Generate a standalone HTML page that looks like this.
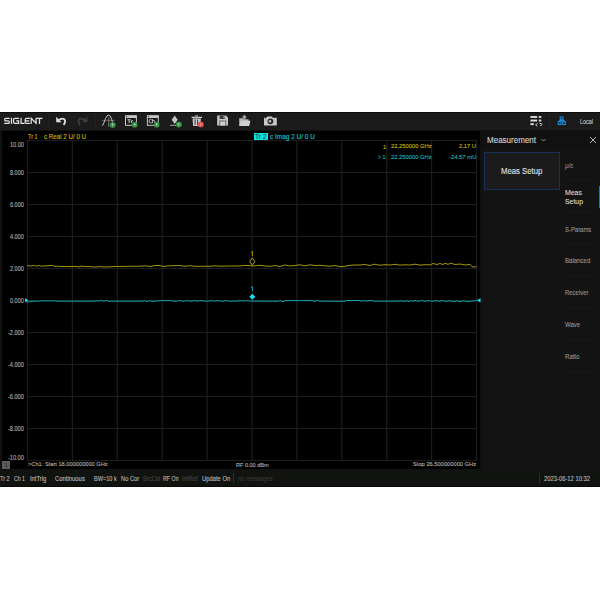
<!DOCTYPE html>
<html><head><meta charset="utf-8">
<style>
*{margin:0;padding:0;box-sizing:border-box}
html,body{width:600px;height:600px;background:#fff;overflow:hidden}
body{position:relative;font-family:"Liberation Sans",sans-serif}
.abs{position:absolute}
#tb{position:absolute;left:0;top:112px;width:600px;height:18px;background:#1b1b1b;border-top:1px solid #0c0c0c}
#main{position:absolute;left:0;top:130px;width:600px;height:340px;background:#0e110e}
#plot{position:absolute;left:2px;top:131px;width:478px;height:338px;background:#000}
#panel{position:absolute;left:482px;top:130px;width:118px;height:340px;background:#131313}
#phead{position:absolute;left:482px;top:130px;width:118px;height:19px;background:#111}
#sb{position:absolute;left:0;top:470px;width:600px;height:17px;background:#101310;border-bottom:1px solid #080808}
.t{position:absolute;white-space:nowrap;transform-origin:0 0;-webkit-text-stroke:0.1px currentColor}
.yl{position:absolute;right:576px;font-size:7px;color:#c4c4c4;white-space:nowrap;line-height:9px;letter-spacing:-0.25px}
.sep{position:absolute;width:1px;background:#232323}
svg{position:absolute;overflow:visible}
</style></head><body>
<div id="tb"></div>
<div id="main"></div>
<div id="plot"></div>
<div id="panel"></div>
<div id="phead"></div>
<div id="sb"></div>

<!-- toolbar -->
<svg width="50" height="20" style="left:0;top:110px" viewBox="0 110 50 20"><g fill="none" stroke="#e2e2e2" stroke-width="1.25">
<path d="M9.7 118.25 H5.6 Q4.75 118.25 4.75 119.2 V119.9 Q4.75 120.8 5.6 120.8 H8.3 Q9.2 120.8 9.2 121.7 V122.4 Q9.2 123.35 8.3 123.35 H4.2"/>
<path d="M11.45 117.7 V123.9"/>
<path d="M19.1 118.25 H14.8 Q13.55 118.25 13.55 119.5 V122.1 Q13.55 123.35 14.8 123.35 H18.6 V120.9 H16.2"/>
<path d="M21.05 117.7 V123.35 H24.6"/>
<path d="M29.9 118.25 H26.4 Q25.2 118.25 25.2 119.5 V122.1 Q25.2 123.35 26.4 123.35 H29.9 M25.2 120.8 H29.2"/>
<path d="M31.2 123.9 V118.3 L36.1 123.3 V117.7"/>
<path d="M36.5 118.25 H42.5 M39.5 118.25 V123.9"/>
</g></svg>

<div class="sep" style="left:48px;top:115px;height:12px"></div>
<div class="sep" style="left:95px;top:115px;height:12px"></div>
<div class="sep" style="left:209px;top:115px;height:12px"></div>
<div class="sep" style="left:257px;top:115px;height:12px"></div>
<div class="sep" style="left:549px;top:115px;height:12px"></div>
<svg width="600" height="20" style="left:0;top:110px" viewBox="0 110 600 20">
 <!-- undo -->
 <path d="M56.2 116.8 L56.2 122.3 L61.6 122.3 Z" fill="#dadada"/>
 <path d="M58.2 120.6 Q61.5 117.6 64.2 119.2 Q66.2 121.5 63.6 124.9" fill="none" stroke="#dadada" stroke-width="1.9"/>
 <!-- redo -->
 <path d="M87.3 116.8 L87.3 122.3 L81.9 122.3 Z" fill="#3e3e3e"/>
 <path d="M85.3 120.6 Q82 117.6 79.3 119.2 Q77.3 121.5 79.9 124.9" fill="none" stroke="#3e3e3e" stroke-width="1.9"/>
 <!-- marker icon -->
 <line x1="101.8" y1="120.4" x2="114.8" y2="120.4" stroke="#7a7a7a" stroke-width="0.7"/>
 <line x1="108.7" y1="117.4" x2="108.7" y2="127" stroke="#909090" stroke-width="0.8"/>
 <path d="M102.3 125.8 Q104.3 122.6 105.5 118.6 Q106.9 115 108.7 115.1 Q110.5 115.2 111.6 119.4 Q112.2 121.6 113 123" fill="none" stroke="#d0d0d0" stroke-width="0.95"/>
 <circle cx="112.7" cy="124.9" r="3.0" fill="#348a40"/>
 <path d="M112.7 123.3 V126.6 M111.2 124.4 H114.2" stroke="#b0d8b0" stroke-width="0.7"/>
 <!-- Tr icon -->
 <rect x="125.5" y="115.7" width="10.9" height="9.6" fill="none" stroke="#c4c8c4" stroke-width="1"/>
 <rect x="125.5" y="115.7" width="10.9" height="2.3" fill="#c4c8c4"/>
 <circle cx="126.6" cy="116.6" r="0.55" fill="#222"/>
 <path d="M127.4 119.75 H130.8 M129.1 119.75 V123 M131.4 120.4 V123 M131.4 121.6 Q131.8 120.6 133.0 120.6" fill="none" stroke="#c8cac8" stroke-width="0.95"/>
 <circle cx="134.7" cy="124.7" r="2.9" fill="#348a40"/>
 <path d="M134.7 123.2 V126.2 M133.3 124.3 H136.1" stroke="#b0d8b0" stroke-width="0.7"/>
 <!-- Ch icon -->
 <rect x="147.4" y="115.7" width="10.9" height="9.6" fill="none" stroke="#c4c8c4" stroke-width="1"/>
 <rect x="147.4" y="115.7" width="10.9" height="2.3" fill="#c4c8c4"/>
 <circle cx="148.5" cy="116.6" r="0.55" fill="#222"/>
 <path d="M151.6 119.7 Q151 119.2 150.4 119.2 Q149.1 119.3 149.1 121.1 Q149.1 123 150.4 123 Q151.1 123 151.7 122.5 M152.4 119.0 V123.1 M152.4 121.2 Q152.9 120.4 153.8 120.4 Q154.8 120.4 154.8 121.4 V123.1" fill="none" stroke="#c8cac8" stroke-width="0.9"/>
 <circle cx="156.7" cy="124.7" r="2.9" fill="#348a40"/>
 <path d="M156.7 123.2 V126.2 M155.3 124.3 H158.1" stroke="#b0d8b0" stroke-width="0.7"/>
 <!-- diamond marker icon -->
 <path d="M174.7 115.5 L177.7 119.7 L174.7 123.9 L171.7 119.7 Z" fill="#c4c4c4"/>
 <line x1="170" y1="125.3" x2="176.5" y2="125.3" stroke="#c4c4c4" stroke-width="0.8"/>
 <circle cx="178.8" cy="124.6" r="3.0" fill="#348a40"/>
 <path d="M178.8 123.0 V126.3 M177.3 124.1 H180.3" stroke="#b0d8b0" stroke-width="0.7"/>
 <!-- trash -->
 <path d="M195.2 115.9 H198" stroke="#c8c8c8" stroke-width="1"/>
 <path d="M191.6 117.4 H202" stroke="#c8c8c8" stroke-width="1.3"/>
 <path d="M192.6 118.6 L193.1 126.1 H200.3 L200.9 118.6 Z" fill="#c8c8c8"/>
 <path d="M195.1 119.6 V125 M197.6 119.6 V125" stroke="#2c2c2c" stroke-width="0.9"/>
 <circle cx="200.8" cy="124.4" r="2.9" fill="#dd5252"/>
 <rect x="199.9" y="123.7" width="1.8" height="1.4" fill="#f4a0a0"/>
 <!-- save -->
 <path d="M217.2 115.6 H226 L228 117.6 V125.6 H217.2 Z" fill="#c8c8c8"/>
 <rect x="219.6" y="115.6" width="5.6" height="3.4" fill="#3a3a3a"/>
 <rect x="223.6" y="116.1" width="1.1" height="2.2" fill="#c8c8c8"/>
 <rect x="219.4" y="120.6" width="6.8" height="5" fill="#505050"/>
 <rect x="220.2" y="121.4" width="5.2" height="4.2" fill="#d0d0d0"/>
 <!-- open folder -->
 <path d="M244.4 114.8 L247 117.6 H245.5 V119.2 H243.3 V117.6 H241.8 Z" fill="#a8a8a8"/>
 <path d="M239.2 118.2 H242.6 L243.4 119.2 H248.6 V126 H239.2 Z" fill="#b4b4b4"/>
 <path d="M240.6 120.8 H250.4 L249.2 126 H239.6 Z" fill="#d0d0d0"/>
 <!-- camera -->
 <path d="M264 117.8 H266.6 L267.2 116.4 H272 L272.6 117.8 H276.8 V125.6 H264 Z" fill="#c8c8c8"/>
 <circle cx="270.4" cy="121.3" r="2.9" fill="#262626"/>
 <circle cx="270.0" cy="121.3" r="1.3" fill="#c0c0c0"/>
 <rect x="265" y="118.3" width="1" height="0.8" fill="#555"/>
 <!-- list icon -->
 <rect x="530.4" y="116" width="6.8" height="1.9" fill="#dadada"/>
 <rect x="538.8" y="116" width="2.5" height="1.9" fill="#dadada"/>
 <rect x="530.4" y="119.6" width="6.8" height="1.9" fill="#dadada"/>
 <rect x="538.8" y="119.6" width="2.5" height="1.9" fill="#dadada"/>
 <rect x="530.4" y="123.2" width="3.4" height="1.9" fill="#dadada"/>
 <path d="M537.6 123.4 L535.6 124.8 L537.4 126.2 M539.4 123.6 Q542 122.8 541.8 124.6 Q541.6 125.8 540.2 125.8" fill="none" stroke="#dadada" stroke-width="0.9"/>
 <!-- network icon -->
 <g fill="none" stroke="#1e8ad6" stroke-width="1.1">
  <rect x="560.2" y="117" width="2.8" height="2.4"/>
  <rect x="558.3" y="121.7" width="2.7" height="2.8"/>
  <rect x="562.7" y="121.7" width="2.7" height="2.8"/>
  <path d="M561.6 119.4 V120.6 M559.6 121.7 V120.6 H564 V121.7"/>
 </g>
</svg>

<!-- plot -->
<svg width="600" height="600" style="left:0;top:0" viewBox="0 0 600 600">
 <g stroke="#1d1d1d" stroke-width="1.2">
<line x1="27.50" y1="140" x2="27.50" y2="461"/>
<line x1="27" y1="140.5" x2="477" y2="140.5"/>
<line x1="72.40" y1="140" x2="72.40" y2="461"/>
<line x1="27" y1="172.5" x2="477" y2="172.5"/>
<line x1="117.30" y1="140" x2="117.30" y2="461"/>
<line x1="27" y1="204.5" x2="477" y2="204.5"/>
<line x1="162.20" y1="140" x2="162.20" y2="461"/>
<line x1="27" y1="236.5" x2="477" y2="236.5"/>
<line x1="207.10" y1="140" x2="207.10" y2="461"/>
<line x1="27" y1="268.5" x2="477" y2="268.5"/>
<line x1="252.00" y1="140" x2="252.00" y2="461"/>
<line x1="27" y1="300.5" x2="477" y2="300.5"/>
<line x1="296.90" y1="140" x2="296.90" y2="461"/>
<line x1="27" y1="332.5" x2="477" y2="332.5"/>
<line x1="341.80" y1="140" x2="341.80" y2="461"/>
<line x1="27" y1="364.5" x2="477" y2="364.5"/>
<line x1="386.70" y1="140" x2="386.70" y2="461"/>
<line x1="27" y1="396.5" x2="477" y2="396.5"/>
<line x1="431.60" y1="140" x2="431.60" y2="461"/>
<line x1="27" y1="428.5" x2="477" y2="428.5"/>
<line x1="476.50" y1="140" x2="476.50" y2="461"/>
<line x1="27" y1="460.5" x2="477" y2="460.5"/>
 </g>
 <polyline points="27.0,266.00 28.0,265.50 30.0,266.20 34.5,265.40 36.0,266.20 39.5,265.40 41.0,266.20 52.5,265.40 54.0,266.20 62.0,266.50 77.0,266.50 79.0,267.00 81.0,266.00 85.0,266.60 90.0,266.60 95.0,267.00 100.0,266.60 105.0,267.00 110.0,266.80 115.0,266.40 120.0,266.50 130.0,266.30 140.0,266.20 145.0,265.80 150.0,266.50 155.0,265.50 160.0,265.50 163.0,266.50 170.0,265.70 180.0,265.50 185.0,266.30 190.0,265.70 195.0,266.30 205.0,266.30 210.0,266.30 215.0,265.80 220.0,266.20 230.0,266.00 240.0,266.00 243.0,265.50 250.0,265.50 252.0,266.00 260.0,265.30 265.0,266.00 270.0,266.30 275.0,265.60 280.0,266.50 285.0,265.00 290.0,266.00 295.0,265.50 300.0,264.80 305.0,265.80 310.0,264.80 315.0,265.50 320.0,265.30 325.0,265.80 330.0,266.20 335.0,265.50 340.0,266.70 345.0,266.30 350.0,265.30 355.0,265.00 360.0,265.00 365.0,264.50 370.0,265.50 374.0,264.20 380.0,265.20 385.0,264.70 390.0,265.00 395.0,264.30 400.0,265.10 405.0,264.80 410.0,265.00 415.0,264.20 420.0,265.10 425.0,264.70 430.0,264.90 433.0,263.50 437.0,264.50 440.0,263.50 443.0,264.50 445.0,263.30 448.0,264.30 451.0,263.20 455.0,264.50 460.0,264.00 465.0,265.00 468.0,264.60 470.0,264.20 472.0,266.80 475.0,267.00 476.5,266.40" fill="none" stroke="#ac9e0c" stroke-width="0.95"/>
 <polyline points="27.0,301.60 28.0,302.30 30.0,301.30 38.0,301.20 40.0,300.90 55.0,300.90 57.0,301.20 94.0,301.20 95.0,300.90 100.0,300.90 101.5,300.30 103.0,300.90 104.0,301.30 105.0,300.90 106.0,300.30 107.5,300.90 108.0,301.20 143.0,301.20 144.0,300.60 145.0,300.80 147.0,301.50 150.0,300.80 152.0,301.30 155.0,301.20 160.0,300.70 170.0,300.60 175.0,301.30 180.0,300.60 183.0,301.30 188.0,300.60 190.0,301.30 195.0,300.60 198.0,301.20 200.0,300.60 205.0,301.20 209.0,301.10 211.0,300.50 213.0,301.10 216.0,301.10 218.0,300.50 220.0,301.10 224.0,301.10 226.0,300.50 228.0,301.10 238.0,301.10 240.0,300.50 242.0,301.10 245.0,300.50 247.0,301.10 248.0,300.50 250.0,301.10 265.0,301.20 278.0,301.30 280.0,300.50 283.0,301.80 285.0,300.60 312.0,300.60 314.0,301.30 316.0,301.30 317.0,300.20 320.0,301.20 345.0,301.30 346.0,300.50 360.0,300.50 361.0,301.30 364.0,300.50 366.0,301.20 371.0,300.40 374.0,301.20 399.0,301.20 400.0,300.60 402.0,301.20 407.0,301.20 408.0,300.60 409.0,302.00 411.0,300.50 413.0,301.30 415.0,300.60 418.0,301.30 422.0,300.60 425.0,301.30 429.0,300.60 432.0,301.30 436.0,300.60 439.0,301.30 442.0,300.60 445.0,301.30 450.0,300.80 453.0,301.50 457.0,300.90 460.0,301.50 464.0,300.90 467.0,301.50 470.0,301.30 474.0,300.90 476.5,300.40" fill="none" stroke="#14aab4" stroke-width="0.95"/>
 <!-- markers -->
 <path d="M252.3 257.9 L254.5 260.9 Q254.9 261.6 254.5 262.2 L252.3 265 L250.1 262.2 Q249.7 261.6 250.1 260.9 Z" fill="none" stroke="#b8a80c" stroke-width="0.95"/>
 <path d="M252.3 293.8 L255.3 296.8 L252.3 299.8 L249.3 296.8 Z" fill="#19d8e8"/>
 <path d="M25 298.2 L28.6 300.3 L25 302.4 Z" fill="#19d8e8"/>
 <path d="M251.0 252.6 L252.5 251.5 V256" fill="none" stroke="#c8b400" stroke-width="0.75"/>
 <path d="M251.0 287.6 L252.5 286.6 V291.1" fill="none" stroke="#19b8c8" stroke-width="0.75"/>
 <rect x="2" y="461" width="8" height="8" fill="#5c5c5c"/>
 <text x="4.6" y="467.2" font-size="5.4" fill="#222" font-family="Liberation Sans">1</text>
 <path d="M480.5 298.2 L476.6 300.3 L480.5 302.4 Z" fill="#19d8e8"/>
</svg>


<!-- trace headers -->
<div class="abs" style="left:254px;top:132.5px;width:14px;height:7.2px;background:#10e0e0"></div>

<!-- marker readouts -->

<!-- bottom of plot -->


<!-- status bar -->
<div class="sep" style="left:233px;top:473px;height:10px;background:#2e2e2e"></div>
<div class="sep" style="left:539px;top:473px;height:10px;background:#2e2e2e"></div>

<!-- side panel -->
<svg width="10" height="10" style="left:539px;top:134.8px" viewBox="0 0 10 10"><path d="M2.5 4 L4.5 6 L6.5 4" fill="none" stroke="#a8a8a8" stroke-width="0.8"/></svg>
<svg width="10" height="10" style="left:589px;top:136px" viewBox="0 0 10 10"><path d="M1 1 L7 7 M7 1 L1 7" fill="none" stroke="#c8c8c8" stroke-width="0.9"/></svg>
<div class="abs" style="left:484px;top:152px;width:76px;height:38px;background:#1b1b1b;border:1px solid #16305a"></div>

<div class="abs" style="left:566px;top:180px;width:30px;height:1px;background:#191919"></div>
<div class="abs" style="left:599px;top:186px;width:1px;height:21.5px;background:#2a6ad8"></div>
<div class="abs" style="left:566px;top:212px;width:30px;height:1px;background:#191919"></div>
<div class="abs" style="left:566px;top:244px;width:30px;height:1px;background:#191919"></div>
<div class="abs" style="left:566px;top:276px;width:30px;height:1px;background:#191919"></div>
<div class="abs" style="left:566px;top:308px;width:30px;height:1px;background:#191919"></div>
<div class="abs" style="left:566px;top:340px;width:30px;height:1px;background:#191919"></div>
<div class="abs" style="left:566px;top:372px;width:30px;height:1px;background:#191919"></div>
<div class="t" style="left:579.97px;top:118.27px;font-size:7.00px;line-height:7.00px;color:#cccccc;transform:scaleX(0.775);">Local</div>
<div class="t" style="left:28.29px;top:134.00px;font-size:6.86px;line-height:6.86px;color:#cdbf00;transform:scaleX(0.801);">Tr 1</div>
<div class="t" style="left:43.75px;top:134.00px;font-size:6.86px;line-height:6.86px;color:#cdbf00;transform:scaleX(0.905);">c Real 2 U/ 0 U</div>
<div class="t" style="left:255.27px;top:133.80px;font-size:6.86px;line-height:6.86px;color:#0b4a50;transform:scaleX(0.958);">Tr 2</div>
<div class="t" style="left:270.14px;top:134.00px;font-size:6.86px;line-height:6.86px;color:#12cdd6;transform:scaleX(0.943);">c Imag 2 U/ 0 U</div>
<div class="t" style="left:10.01px;top:141.56px;font-size:6.43px;line-height:6.43px;color:#b4b4b4;transform:scaleX(0.870);">10.00</div>
<div class="t" style="left:10.18px;top:169.56px;font-size:6.43px;line-height:6.43px;color:#b4b4b4;transform:scaleX(0.859);">8.000</div>
<div class="t" style="left:10.12px;top:201.56px;font-size:6.43px;line-height:6.43px;color:#b4b4b4;transform:scaleX(0.863);">6.000</div>
<div class="t" style="left:10.29px;top:233.56px;font-size:6.43px;line-height:6.43px;color:#b4b4b4;transform:scaleX(0.852);">4.000</div>
<div class="t" style="left:10.12px;top:265.56px;font-size:6.43px;line-height:6.43px;color:#b4b4b4;transform:scaleX(0.863);">2.000</div>
<div class="t" style="left:10.23px;top:297.56px;font-size:6.43px;line-height:6.43px;color:#b4b4b4;transform:scaleX(0.856);">0.000</div>
<div class="t" style="left:8.18px;top:329.56px;font-size:6.43px;line-height:6.43px;color:#b4b4b4;transform:scaleX(0.868);">-2.000</div>
<div class="t" style="left:8.18px;top:361.56px;font-size:6.43px;line-height:6.43px;color:#b4b4b4;transform:scaleX(0.868);">-4.000</div>
<div class="t" style="left:8.18px;top:393.56px;font-size:6.43px;line-height:6.43px;color:#b4b4b4;transform:scaleX(0.868);">-6.000</div>
<div class="t" style="left:8.18px;top:425.56px;font-size:6.43px;line-height:6.43px;color:#b4b4b4;transform:scaleX(0.868);">-8.000</div>
<div class="t" style="left:8.18px;top:455.16px;font-size:6.43px;line-height:6.43px;color:#b4b4b4;transform:scaleX(0.868);">-10.00</div>
<div class="t" style="left:383.05px;top:143.62px;font-size:6.00px;line-height:6.00px;color:#c9bb00;transform:scaleX(0.838);">1:</div>
<div class="t" style="left:391.11px;top:143.40px;font-size:6.14px;line-height:6.14px;color:#c9bb00;transform:scaleX(0.946);">22.250000 GHz</div>
<div class="t" style="left:458.91px;top:143.40px;font-size:6.14px;line-height:6.14px;color:#c9bb00;transform:scaleX(0.934);">2.17 U</div>
<div class="t" style="left:378.19px;top:153.62px;font-size:6.00px;line-height:6.00px;color:#14b9c6;transform:scaleX(0.893);">&gt; 1:</div>
<div class="t" style="left:391.11px;top:153.60px;font-size:6.14px;line-height:6.14px;color:#14b9c6;transform:scaleX(0.946);">22.250000 GHz</div>
<div class="t" style="left:448.56px;top:153.60px;font-size:6.14px;line-height:6.14px;color:#14b9c6;transform:scaleX(0.958);">-24.57 mU</div>
<div class="t" style="left:28.17px;top:462.24px;font-size:5.86px;line-height:5.86px;color:#b4b4b4;transform:scaleX(0.969);">&gt;Ch1: Start 18.000000000 GHz</div>
<div class="t" style="left:235.96px;top:462.00px;font-size:6.14px;line-height:6.14px;color:#b4b4b4;transform:scaleX(0.903);">RF 0.00 dBm</div>
<div class="t" style="left:413.47px;top:462.04px;font-size:5.86px;line-height:5.86px;color:#b4b4b4;transform:scaleX(0.978);">Stop 26.500000000 GHz</div>
<div class="t" style="left:0.39px;top:475.56px;font-size:6.43px;line-height:6.43px;color:#bdbdbd;transform:scaleX(0.864);">Tr 2</div>
<div class="t" style="left:14.14px;top:475.56px;font-size:6.43px;line-height:6.43px;color:#bdbdbd;transform:scaleX(0.802);">Ch 1</div>
<div class="t" style="left:29.88px;top:475.56px;font-size:6.43px;line-height:6.43px;color:#bdbdbd;transform:scaleX(0.904);">IntTrig</div>
<div class="t" style="left:55.10px;top:475.56px;font-size:6.43px;line-height:6.43px;color:#bdbdbd;transform:scaleX(0.919);">Continuous</div>
<div class="t" style="left:93.66px;top:475.56px;font-size:6.43px;line-height:6.43px;color:#bdbdbd;transform:scaleX(0.864);">BW=10 k</div>
<div class="t" style="left:120.74px;top:475.56px;font-size:6.43px;line-height:6.43px;color:#bdbdbd;transform:scaleX(0.890);">No Cor</div>
<div class="t" style="left:142.67px;top:475.56px;font-size:6.43px;line-height:6.43px;color:#474747;transform:scaleX(0.896);">SrcCal</div>
<div class="t" style="left:163.28px;top:475.56px;font-size:6.43px;line-height:6.43px;color:#bdbdbd;transform:scaleX(0.825);">RF On</div>
<div class="t" style="left:181.58px;top:475.56px;font-size:6.43px;line-height:6.43px;color:#474747;transform:scaleX(0.904);">IntRef</div>
<div class="t" style="left:201.69px;top:475.56px;font-size:6.43px;line-height:6.43px;color:#bdbdbd;transform:scaleX(0.908);">Update On</div>
<div class="t" style="left:237.55px;top:475.56px;font-size:6.43px;line-height:6.43px;color:#3a3a3a;transform:scaleX(0.908);">no messages</div>
<div class="t" style="left:543.81px;top:475.56px;font-size:6.43px;line-height:6.43px;color:#bdbdbd;transform:scaleX(0.907);">2023-06-12 10:32</div>
<div class="t" style="left:487.46px;top:135.70px;font-size:8.86px;line-height:8.86px;color:#d6d6d6;transform:scaleX(0.907);">Measurement</div>
<div class="t" style="left:501.18px;top:167.00px;font-size:8.86px;line-height:8.86px;color:#e2e2e2;transform:scaleX(0.874);">Meas Setup</div>
<div class="t" style="left:565.16px;top:226.62px;font-size:6.71px;line-height:6.71px;color:#969696;transform:scaleX(0.882);">S-Params</div>
<div class="t" style="left:564.91px;top:258.22px;font-size:6.71px;line-height:6.71px;color:#969696;transform:scaleX(0.908);">Balanced</div>
<div class="t" style="left:564.92px;top:290.12px;font-size:6.71px;line-height:6.71px;color:#969696;transform:scaleX(0.889);">Receiver</div>
<div class="t" style="left:565.40px;top:322.02px;font-size:6.71px;line-height:6.71px;color:#969696;transform:scaleX(0.888);">Wave</div>
<div class="t" style="left:564.91px;top:353.82px;font-size:6.71px;line-height:6.71px;color:#969696;transform:scaleX(0.920);">Ratio</div>
<div class="t" style="left:564.85px;top:189.29px;font-size:7.57px;line-height:7.57px;color:#dadada;transform:scaleX(0.916);">Meas</div>
<div class="t" style="left:565.12px;top:197.89px;font-size:7.57px;line-height:7.57px;color:#dadada;transform:scaleX(0.911);">Setup</div>
<div class="t" style="left:565.21px;top:162.96px;font-size:6.43px;line-height:6.43px;color:#8a8a8a;transform:scaleX(1.017);">μ/ε</div>
</body></html>
